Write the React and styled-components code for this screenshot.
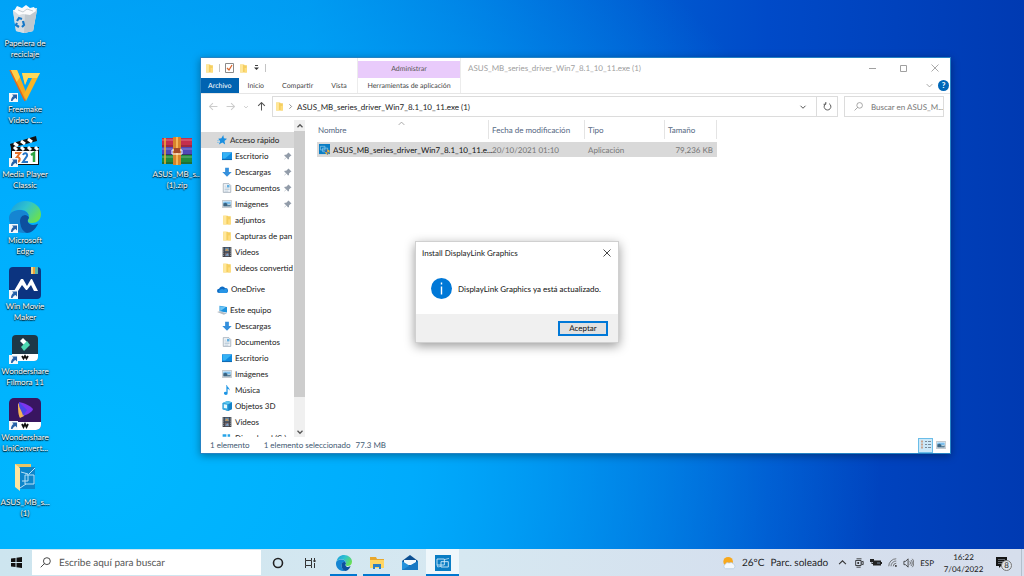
import React from 'react';
import styled, { createGlobalStyle, css } from 'styled-components';

const GlobalStyle = createGlobalStyle`
  * {
    box-sizing: border-box;
  }
  body {
    margin: 0;
    overflow: hidden;
    font-family: Lato, 'Open Sans', sans-serif;
    font-size: 8px;
    line-height: 12px;
    color: #222;
    text-rendering: geometricPrecision;
  }
  button, input {
    font: inherit;
    color: inherit;
    border: 0;
    padding: 0;
    margin: 0;
    background: none;
    text-rendering: inherit;
  }
  a {
    color: inherit;
    text-decoration: none;
  }
  ul {
    margin: 0;
    padding: 0;
    list-style: none;
  }
  svg {
    display: block;
    flex: none;
  }
`;

/* ---------- icons ---------- */

const FolderIcon = ({ size = 9 }) => (
  <svg width={size} height={size} viewBox="0 0 16 16">
    <path d="M2 1h7l1 1h4v13H2z" fill="#f5cf60" />
    <path d="M2 1h5v14H2z" fill="#ffe79b" />
    <path d="M10 7h4v8h-4z" fill="#ffdd7c" />
  </svg>
);

const StarIcon = () => (
  <svg width="10" height="10" viewBox="0 0 16 16">
    <path d="M10 0l1 5 5 1-4 3.500 1 5.500-4.500-3L3 15l2-5-3-4 5-1z" fill="#1b8fe0" />
    <path d="M0 9h4M0 12h3" stroke="#7cc0ee" strokeWidth="1.200" />
  </svg>
);

const DesktopIcon = () => (
  <svg width="10" height="10" viewBox="0 0 16 16">
    <path d="M0 2h16v12H0z" fill="#0f8be0" />
    <path d="M1 3h14L5 12H1z" fill="#35b2f5" />
    <path d="M0 13h16v1.500H0z" fill="#0a62ab" />
  </svg>
);

const DownloadIcon = () => (
  <svg width="10" height="10" viewBox="0 0 16 16">
    <path d="M5 1h6v7h4.500L8 15.500.5 8H5z" fill="#3590dc" />
  </svg>
);

const DocIcon = () => (
  <svg width="10" height="10" viewBox="0 0 16 16">
    <path d="M2 1h9l3 3v11H2z" fill="#f4f7fa" stroke="#8795a3" />
    <path d="M4 5h3M4 8h8M4 10.500h8M4 13h6" stroke="#9bb4c8" />
    <path d="M8 3h4v4H8z" fill="#61aee0" />
  </svg>
);

const PictureIcon = ({ width = 10 }) => (
  <svg width={width} height="10" viewBox="0 0 16 16">
    <path d="M.5 2.500h15v11H.5z" fill="#fff" stroke="#9aa5ae" />
    <path d="M2 4h12v4H2z" fill="#7dbfec" />
    <path d="M2 7l4-1 3 2h5v4H2z" fill="#3a6482" />
    <path d="M9 8h5v2H8z" fill="#b8cfdc" />
  </svg>
);

const VideoIcon = () => (
  <svg width="10" height="10" viewBox="0 0 16 16">
    <path d="M1 0h14v16H1z" fill="#3c4048" />
    <path d="M2.500 1v14M13.500 1v14" stroke="#d4d8dd" strokeDasharray="1.500 1.500" />
    <path d="M4.500 1h7v6h-7z" fill="#6087ab" />
    <path d="M4.500 9h7v6h-7z" fill="#7a6b70" />
    <path d="M5 5l3-3 3 4H5z" fill="#d79a4c" />
    <path d="M5 14l4-4 2 4z" fill="#7aa9d4" />
  </svg>
);

const CloudIcon = () => (
  <svg width="11" height="11" viewBox="0 0 16 16">
    <path d="M3 13a3 3 0 0 1 0-6 5 5 0 0 1 9-1 3.500 3.500 0 0 1 1 7z" fill="#0f6cc4" />
    <path d="M4 13a3 3 0 0 1 1-5 4 4 0 0 1 5 .5 3 3 0 0 1 5.500 2A2.500 2.500 0 0 1 13 13z" fill="#2795e6" />
  </svg>
);

const PcIcon = () => (
  <svg width="10" height="10" viewBox="0 0 16 16">
    <path d="M4 1l12 2v9L4 10z" fill="#1d93de" />
    <path d="M5 2l9 1.500L6 9H5z" fill="#6dc5f5" />
    <path d="M0 11l4-1 12 3-5 2.500z" fill="#b4bdc5" />
  </svg>
);

const MusicIcon = () => (
  <svg width="10" height="10" viewBox="0 0 16 16">
    <path d="M8 0c0 4 5 4 4 9-1-2-2-3-3-3v7a3 2.500 0 1 1-2-2V0z" fill="#1c94e4" />
  </svg>
);

const CubeIcon = () => (
  <svg width="10" height="10" viewBox="0 0 16 16">
    <path d="M9 0l7 2v11l-6 3-9-3V3z" fill="#1482c8" />
    <path d="M8 0l8 2-6 3-9-2z" fill="#5cc6ee" />
    <path d="M1 3l9 2v11l-9-3z" fill="#36a9e0" />
    <path d="M3 5l5 1v6l-5-1z" fill="#e7f8fc" />
  </svg>
);

const DiskIcon = () => (
  <svg width="10" height="10" viewBox="0 0 16 16">
    <path d="M1 2h6v4H1zM9 2h4v4H9z" fill="#27a4e8" />
    <path d="M0 9h16v4H0z" fill="#9aa3ab" />
  </svg>
);

const PinIcon = () => (
  <svg width="8" height="8" viewBox="0 0 16 16">
    <path d="M9 1l6 6-2 1-3 3v3l-2 1-3-4-4 4-.5-.5 4-4-4-3 1-2h3l3-3z" fill="#929ca9" />
  </svg>
);

const AppIcon = ({ size = 11 }) => (
  <svg width={size} height={size} viewBox="0 0 24 24">
    <path d="M0 0h24v24H0z" fill="#0a7dc4" />
    <path d="M3 6h11v9H3zM9 10h11v8H9z" fill="none" stroke="#d9effb" strokeWidth="1.300" />
    <path d="M14 7l7-2M3 15l1 3 5-1" fill="none" stroke="#d9effb" />
  </svg>
);

const AppShieldIcon = () => (
  <svg width="11" height="11" viewBox="0 0 24 24">
    <path d="M0 0h24v22H0z" fill="#0a7dc4" />
    <path d="M3 5h10v8H3zM8 9h11v8H8z" fill="none" stroke="#a8d8f2" strokeWidth="1.300" />
    <path d="M13 14l5-2 5 2v5l-5 5-5-5z" fill="#f0b732" />
    <path d="M13 14l5-2v6h-5zM18 18h5l-5 6z" fill="#2d68bd" />
  </svg>
);

const Chevron = ({ dir = 'down', size = 8, color = '#555', weight = 1.5 }) => {
  const paths = {
    down: 'M3 5.500l5 5 5-5',
    up: 'M3 10.500l5-5 5 5',
    right: 'M5.500 3l5 5-5 5'
  };
  return (
    <svg width={size} height={size} viewBox="0 0 16 16">
      <path d={paths[dir]} fill="none" stroke={color} strokeWidth={weight} />
    </svg>
  );
};

const Arrow = ({ dir = 'left', color = '#ccc' }) => {
  const paths = {
    left: 'M15 8H1M7 2L1 8l6 6',
    right: 'M1 8h14M9 2l6 6-6 6',
    up: 'M8 15V1M2 7l6-6 6 6'
  };
  return (
    <svg width="9" height="9" viewBox="0 0 16 16">
      <path d={paths[dir]} fill="none" stroke={color} strokeWidth="1.800" />
    </svg>
  );
};

const SearchIcon = ({ size = 9, color = '#8a8a8a' }) => (
  <svg width={size} height={size} viewBox="0 0 16 16">
    <circle cx="10" cy="6" r="5" fill="none" stroke={color} strokeWidth="1.300" />
    <path d="M6.500 9.500L1 15" stroke={color} strokeWidth="1.300" />
  </svg>
);

const CloseIcon = ({ color = '#a0a0a0' }) => (
  <svg width="8" height="8" viewBox="0 0 16 16">
    <path d="M1 1l14 14M15 1L1 15" stroke={color} strokeWidth="1.800" />
  </svg>
);

const EdgeIcon = ({ size = 32 }) => (
  <svg width={size} height={size} viewBox="0 0 32 32">
    <defs>
      <linearGradient id="edgeTop" x1="0" y1="0" x2="1" y2="0.600">
        <stop offset="0" stopColor="#1698df" />
        <stop offset="0.500" stopColor="#2fc3cf" />
        <stop offset="1" stopColor="#68df55" />
      </linearGradient>
    </defs>
    <path d="M1 14C2 5 9 0 16 0c9 0 16 6 16 13 0 6-4 9-9 9-4 0-5-2-4-3 2-3 1-9-6-10-5-1-10 1-12 5z" fill="url(#edgeTop)" />
    <path d="M0 17C0 11 6 9 11 9c4 0 8 2 9 6-4-3-9 0-9 6 0 5 3 9 7 11C7 33 0 26 0 17z" fill="#1585d2" />
    <path d="M11 20c0-3 2-6 5-6 2 0 4 1 4 3-3 3 0 7 4 7 3 0 5-2 5-1-3 6-7 9-11 9-4-1-7-6-7-12z" fill="#0d4f9e" />
  </svg>
);

const BinIcon = () => (
  <svg width="32" height="32" viewBox="0 0 32 32">
    <path d="M4 6l24-2-4 23-9 2-8-2z" fill="#e9edf0" />
    <path d="M4 7l12 3 12-4-4 21-9 2-8-2z" fill="#d5dce1" />
    <path d="M16 10l12-4-4 21-9 2z" fill="#bfc8cf" />
    <path d="M5 7l3-5 5 2 4-3 4 3 4-1 2 4-6 4-7-1-4 1z" fill="#fafbfc" />
    <path d="M9 6l5 2 4-3 6 2" fill="none" stroke="#c5cdd3" />
    <path d="M8 17l2-3 3 1M14 17l1 4-2 2M10 23l-3-2 1-2" fill="none" stroke="#1778c8" strokeWidth="2.200" />
  </svg>
);

const FreemakeIcon = () => (
  <svg width="32" height="32" viewBox="0 0 32 32">
    <path d="M1 0h7l9 22-1 9z" fill="#f7a91f" />
    <path d="M1 0h7l3 7-4 6z" fill="#ffd24a" />
    <path d="M13 3h18L17 31l-2-7 8-16h-4l-3 7z" fill="#f9b526" />
    <path d="M13 3h18l-3 5h-9l-3 7z" fill="#ffd95c" />
    <path d="M1 0l15 31" stroke="#e36a1c" strokeWidth="1.500" />
  </svg>
);

const ClapperIcon = () => (
  <svg width="32" height="32" viewBox="0 0 32 32">
    <path d="M1 9L27 1l1 5L2 13z" fill="#111" />
    <path d="M5 8l4 3M12 6l4 3M19 4l4 3" stroke="#fff" strokeWidth="3" />
    <path d="M2 12h28v18H2z" fill="#111" />
    <path d="M3 16h26v13H3z" fill="#fff" />
    <path d="M5 12l3 3M12 12l3 3M19 12l3 3M26 12l3 3" stroke="#fff" strokeWidth="3" />
    <path d="M6 18h5l-3 4c4 0 4 6-3 5" fill="none" stroke="#e4722a" strokeWidth="2" />
    <path d="M14 20c1-3 5-2 4 1l-4 6h5" fill="none" stroke="#2676c8" strokeWidth="2" />
    <path d="M22 20l3-2v9" fill="none" stroke="#2fa341" strokeWidth="2.500" />
  </svg>
);

const MovieMakerIcon = () => (
  <svg width="32" height="32" viewBox="0 0 32 32">
    <rect width="32" height="32" rx="4" fill="#0c3480" />
    <path d="M22 0h2v7h-2z" fill="#f2d98a" />
    <path d="M24 0h2v7h-2z" fill="#f0a038" />
    <path d="M26 0h3v7h-3z" fill="#59b5a8" />
    <path d="M5 24l7-12h2l4 7 4-7h1l6 12h-4l-3-6-4 5h-1l-4-5-4 6z" fill="#fff" />
  </svg>
);

const FilmoraIcon = () => (
  <svg width="32" height="32" viewBox="0 0 32 32">
    <rect x="3" y="3" width="26" height="26" rx="4" fill="#1d3847" />
    <path d="M3 22h26v3a4 4 0 0 1-4 4H3z" fill="#fff" />
    <path d="M11 9l3-3 4 4-3 3z" fill="#fff" />
    <path d="M12 15l6-6 3 4-6 6z" fill="#4ed8b2" />
    <path d="M13 24l1.500 2.500L16 24l1.500 2.500L19 24" fill="none" stroke="#111" strokeWidth="1.800" />
  </svg>
);

const UniConvertIcon = () => (
  <svg width="32" height="32" viewBox="0 0 32 32">
    <rect width="32" height="32" rx="5" fill="#381560" />
    <path d="M0 24h32v3a5 5 0 0 1-5 5H0z" fill="#fff" />
    <path d="M10 4c5 1 12 4 14 7 0 3-7 6-12 8z" fill="#7d35ee" />
    <path d="M9 5c3 3 6 7 6 13l-4 2c-2-3-2-10-2-15z" fill="#f5b455" />
    <path d="M10 4l8 8-4 6c-1-6-5-8-4-14z" fill="#4a46e8" />
    <path d="M13 26l1.500 3 1.500-3 1.500 3 1.500-3" fill="none" stroke="#111" strokeWidth="1.800" />
  </svg>
);

const DriverFolderIcon = () => (
  <svg width="32" height="32" viewBox="0 0 32 32">
    <path d="M6 1h16v5H6z" fill="#e9c566" />
    <path d="M10 4h16v22H10z" fill="#0d86cb" />
    <path d="M12 9l7 2v7h-6M16 12h9v9h-9zM11 25l6-4M26 5l-6 6" fill="none" stroke="#b9e2f7" />
    <path d="M6 1l5 4v23l-5-4z" fill="#ffe5a0" />
  </svg>
);

const ArchiveIcon = () => (
  <svg width="32" height="32" viewBox="0 0 32 32">
    <path d="M1 3h30v9H1z" fill="#c42f4d" />
    <path d="M1 12h30v8H1z" fill="#5148b5" />
    <path d="M1 20h30v9H1z" fill="#218a3c" />
    <path d="M1 5h30M1 14h30M1 22h30" stroke="#fff" strokeOpacity="0.350" />
    <path d="M1 11h30M1 19.500h30M1 28h30" stroke="#222" strokeOpacity="0.500" />
    <path d="M4 3v26" stroke="#edb737" strokeWidth="1.500" />
    <path d="M12 2h8v28h-8z" fill="#d8842b" />
    <path d="M15 2h2v28h-2z" fill="#f3b558" />
    <path d="M11 15h10v4H11z" fill="none" stroke="#fff" />
    <path d="M13 13h6v5h-6z" fill="#a64a28" />
  </svg>
);

const ExplorerIcon = () => (
  <svg width="16" height="16" viewBox="0 0 16 16">
    <path d="M1 2h6l1 2h7v9H1z" fill="#e8a82c" />
    <path d="M1 5h14v8H1z" fill="#ffd664" />
    <path d="M4 9h8v5h-2v-2H6v2H4z" fill="#2c7fc6" />
  </svg>
);

const MailIcon = () => (
  <svg width="18" height="18" viewBox="0 0 18 18">
    <path d="M1 7l8-6 8 6v9H1z" fill="#0b4f92" />
    <path d="M3 6h12v5H3z" fill="#f3f8fb" />
    <path d="M1 7l8 5 8-5v9H1z" fill="#2492dc" />
    <path d="M1 16l16-9v9z" fill="#1878c3" />
  </svg>
);

const WindowsIcon = () => (
  <svg width="11" height="11" viewBox="0 0 11 11">
    <path d="M0 1.500L4.500 1v4H0zM5.500.8L11 0v5H5.500zM0 6h4.500v4L0 9.500zM5.500 6H11v5l-5.500-.8z" fill="#111" />
  </svg>
);

const TaskViewIcon = () => (
  <svg width="12" height="12" viewBox="0 0 12 12">
    <path d="M.5 1v2.500h6V1M.5 11V8.500h6V11M.5 3.500v5M6.500 3.500v5M9.500 1v2M9.500 6v5" fill="none" stroke="#333" />
    <path d="M8.500 3h2v2h-2z" fill="#333" />
  </svg>
);

const WeatherIcon = () => (
  <svg width="14" height="14" viewBox="0 0 16 16">
    <circle cx="7" cy="6.500" r="5.500" fill="#f7a81d" />
    <path d="M4 14.500a3 3 0 0 1 0-5.500 3 3 0 0 1 4-1 4 4 0 0 1 5 1 3 3 0 0 1 0 5.500z" fill="#f4f8fc" stroke="#a9c3dd" strokeWidth="0.700" />
  </svg>
);

const MeetIcon = () => (
  <svg width="10" height="10" viewBox="0 0 12 12">
    <path d="M3 1h6M2 3h6.500v6H2zM8.500 5L11 4v4L8.500 7M3 11h5" fill="none" stroke="#222" />
    <circle cx="5" cy="6" r="1.200" fill="#222" />
  </svg>
);

const BatteryIcon = () => (
  <svg width="12" height="10" viewBox="0 0 12 10">
    <path d="M3 2.500h8v5H3z" fill="#222" />
    <path d="M11 4h1v2h-1zM0 1h4v3H0zM1.500 4v2H4" fill="#222" />
    <path d="M7 4h3v2H7z" fill="#4c5560" />
  </svg>
);

const WifiIcon = () => (
  <svg width="9" height="9" viewBox="0 0 12 12">
    <path d="M1 11A10 10 0 0 1 11 1M4 11a7 7 0 0 1 7-7M7 11a4 4 0 0 1 4-4" fill="none" stroke="#555" />
    <circle cx="10.500" cy="10.500" r="1.300" fill="#333" />
  </svg>
);

const SpeakerIcon = () => (
  <svg width="11" height="10" viewBox="0 0 13 12">
    <path d="M1 4h2l3-3v10L3 8H1z" fill="none" stroke="#333" />
    <path d="M8 4c1 1 1 3 0 4M9.500 2.500c2 2 2 5 0 7M11 1c2.500 3 2.500 7 0 10" fill="none" stroke="#555" />
  </svg>
);

const icons = {
  star: <StarIcon />,
  desktop: <DesktopIcon />,
  download: <DownloadIcon />,
  doc: <DocIcon />,
  picture: <PictureIcon />,
  folder: <FolderIcon size={10} />,
  video: <VideoIcon />,
  cloud: <CloudIcon />,
  pc: <PcIcon />,
  music: <MusicIcon />,
  cube: <CubeIcon />,
  disk: <DiskIcon />
};

/* ---------- data ---------- */

const shortcuts = [
  { lines: ['Papelera de', 'reciclaje'], icon: <BinIcon /> },
  { lines: ['Freemake', 'Video C...'], icon: <FreemakeIcon />, link: true },
  { lines: ['Media Player', 'Classic'], icon: <ClapperIcon />, link: true },
  { lines: ['Microsoft', 'Edge'], icon: <EdgeIcon />, link: true },
  { lines: ['Win Movie', 'Maker'], icon: <MovieMakerIcon />, link: true },
  { lines: ['Wondershare', 'Filmora 11'], icon: <FilmoraIcon />, link: true },
  { lines: ['Wondershare', 'UniConvert...'], icon: <UniConvertIcon />, link: true },
  { lines: ['ASUS_MB_s...', '(1)'], icon: <DriverFolderIcon /> },
  { lines: ['ASUS_MB_s...', '(1).zip'], icon: <ArchiveIcon />, column: 4, row: 3 }
];

const places = [
  { name: 'Acceso rápido', icon: 'star', root: true, selected: true },
  { name: 'Escritorio', icon: 'desktop', pinned: true },
  { name: 'Descargas', icon: 'download', pinned: true },
  { name: 'Documentos', icon: 'doc', pinned: true },
  { name: 'Imágenes', icon: 'picture', pinned: true },
  { name: 'adjuntos', icon: 'folder' },
  { name: 'Capturas de pan', icon: 'folder' },
  { name: 'Videos', icon: 'video' },
  { name: 'videos convertid', icon: 'folder' },
  { name: 'OneDrive', icon: 'cloud', root: true },
  { name: 'Este equipo', icon: 'pc', root: true },
  { name: 'Descargas', icon: 'download' },
  { name: 'Documentos', icon: 'doc' },
  { name: 'Escritorio', icon: 'desktop' },
  { name: 'Imágenes', icon: 'picture' },
  { name: 'Música', icon: 'music' },
  { name: 'Objetos 3D', icon: 'cube' },
  { name: 'Videos', icon: 'video' },
  { name: 'Disco local (C:)', icon: 'disk' }
];

/* ---------- desktop ---------- */

const Screen = styled.div`
  height: 100vh;
  display: flex;
  flex-direction: column;
  background:
    radial-gradient(ellipse 76% 120% at 10% 80%, rgba(0, 184, 255, 1) 0%, rgba(0, 176, 255, 0.9) 40%, rgba(0, 140, 240, 0) 100%),
    linear-gradient(90deg, #0096f0 0%, #008ce8 30%, #0068d8 53%, #004ac8 75%, #003ab2 100%);
`;

const Desktop = styled.main`
  position: relative;
  flex: 1;
  min-height: 0;
`;

const IconGrid = styled.div`
  height: 100%;
  padding: 4px 0 20px;
  display: grid;
  grid-template-columns: repeat(3, 50px) 54px;
  grid-template-rows: repeat(8, 1fr);
`;

const Shortcut = styled.button`
  grid-column: ${props => props.$column || 1};
  grid-row: ${props => props.$row || 'auto'};
  display: flex;
  flex-direction: column;
  align-items: center;
  justify-content: flex-start;
  gap: 2px;
  color: #fff;
  line-height: 11px;
  text-shadow: 0 1px 1px #000, 0 0 2px rgba(0, 0, 0, 0.8);
  white-space: nowrap;
`;

const ShortcutIcon = styled.span`
  position: relative;
`;

const LinkBadge = styled.span`
  position: absolute;
  left: 0;
  bottom: 0;
  background: #f4f8fb;
`;

const Line = styled.span`
  display: block;
`;

/* ---------- explorer window ---------- */

const Window = styled.section`
  position: absolute;
  top: 57px;
  right: 73px;
  bottom: 95px;
  left: 200px;
  display: flex;
  flex-direction: column;
  background: #fff;
  border: 1px solid #2583c4;
  box-shadow: 0 2px 8px rgba(0, 0, 0, 0.35);
`;

const TitleBar = styled.header`
  height: 36px;
  flex: none;
  display: flex;
  border-bottom: 1px solid #e6e6e6;
`;

const TitleLeft = styled.div`
  width: 156px;
  display: flex;
  flex-direction: column;
`;

const QuickTools = styled.div`
  height: 20px;
  padding-left: 4px;
  display: flex;
  align-items: center;
  gap: 5px;
`;

const Divider = styled.span`
  width: 1px;
  height: 8px;
  background: #c4c4c4;
`;

const Tabs = styled.div`
  flex: 1;
  display: flex;
`;

const Tab = styled.button`
  padding: 0 9px;
  color: #444;
  font-size: 7px;
  white-space: nowrap;
  ${props => props.$file && css`
    padding: 0 7px;
    background: #0063b1;
    color: #fff;
  `}
  ${props => props.$fill && css`
    flex: 1;
    padding: 0;
  `}
`;

const ToolTab = styled.div`
  width: 104px;
  display: flex;
  flex-direction: column;
  border: 1px solid #ececec;
  border-width: 0 1px;
`;

const ToolGroup = styled.span`
  height: 17px;
  margin-top: 3px;
  line-height: 17px;
  text-align: center;
  font-size: 7px;
  color: #555;
  background: #e9cbfb;
`;

const Title = styled.h1`
  flex: 1;
  margin: 0;
  padding: 4px 7px;
  font-size: 8px;
  font-weight: 400;
  color: #a0a0a0;
`;

const TitleRight = styled.div`
  display: flex;
  flex-direction: column;
  align-items: flex-end;
`;

const Controls = styled.div`
  display: flex;
`;

const ControlButton = styled.button`
  width: 31px;
  height: 20px;
  display: flex;
  align-items: center;
  justify-content: center;
`;

const HelpRow = styled.div`
  flex: 1;
  padding-right: 1px;
  display: flex;
  align-items: center;
  gap: 4px;
`;

const HelpButton = styled.button`
  width: 11px;
  height: 11px;
  border-radius: 50%;
  background: #0067b8;
  color: #fff;
  line-height: 11px;
  font-weight: 700;
`;

const AddressRow = styled.div`
  flex: none;
  padding: 2px 6px 3px 4px;
  display: flex;
  gap: 6px;
`;

const History = styled.div`
  width: 61px;
  padding: 0 0 0 4px;
  display: flex;
  align-items: center;
  justify-content: space-between;

  button {
    display: flex;
  }
`;

const AddressBox = styled.div`
  flex: 1;
  height: 21px;
  padding-left: 2px;
  display: flex;
  align-items: center;
  gap: 3px;
  border: 1px solid #dcdcdc;
`;

const Path = styled.a`
  flex: 1;
  color: #222;
`;

const BoxButton = styled.button`
  width: 21px;
  height: 19px;
  display: flex;
  align-items: center;
  justify-content: center;
  border-left: ${props => props.$line ? '1px solid #dcdcdc' : '0'};
`;

const SearchBox = styled.label`
  width: 100px;
  height: 21px;
  padding: 0 0 0 9px;
  display: flex;
  align-items: center;
  gap: 8px;
  border: 1px solid #dcdcdc;

  input {
    flex: 1;
    min-width: 0;
    outline: none;
  }
  input::placeholder {
    color: #767676;
    opacity: 1;
  }
`;

const Body = styled.div`
  flex: 1;
  min-height: 0;
  display: flex;
`;

const NavPane = styled.nav`
  width: 93px;
  flex: none;
  padding-top: 12px;
  overflow: hidden;
`;

const Place = styled.li`
  height: 16px;
  margin-top: ${props => props.$gap ? '5px' : '0'};
  background: ${props => props.$selected ? '#d9d9d9' : 'transparent'};

  a {
    height: 100%;
    padding: 0 2px 0 ${props => props.$root ? '16px' : '21px'};
    display: flex;
    align-items: center;
    gap: 3px;
    white-space: nowrap;
  }
  span {
    flex: 1;
  }
`;

const ScrollBar = styled.div`
  width: 11px;
  flex: none;
  display: flex;
  flex-direction: column;
  align-items: center;
  background: #f0f0f0;

  button {
    height: 11px;
  }
`;

const Thumb = styled.div`
  width: 100%;
  height: 84%;
  margin-bottom: auto;
  background: #cdcdcd;
`;

const FilePane = styled.div`
  flex: 1;
  position: relative;
  padding-left: 12px;
`;

const SortMark = styled.span`
  position: absolute;
  top: -1px;
  left: 92px;
`;

const Files = styled.table`
  width: 400px;
  table-layout: fixed;
  border-collapse: separate;
  border-spacing: 0;

  th {
    height: 19px;
    padding: 0 3px;
    text-align: left;
    font-weight: 400;
    color: #54677f;
    border-right: 1px solid #e4e4e4;
  }
  th:first-child {
    padding-left: 1px;
  }
  tbody::before {
    content: '';
    display: block;
    height: 3px;
  }
  td {
    height: 15px;
    padding: 0 4px 0 3px;
    color: #777;
    background: #d9d9d9;
    white-space: nowrap;
  }
  td:first-child {
    padding: 0 0 0 2px;
  }
`;

const FileName = styled.span`
  display: flex;
  align-items: center;
  gap: 3px;
  color: #111;
`;

const StatusBar = styled.footer`
  height: 16px;
  flex: none;
  padding: 0 2px 0 9px;
  display: flex;
  align-items: center;
  color: #3f5a73;
`;

const StatusText = styled.span`
  margin-right: ${props => props.$wide ? '14px' : '5px'};
`;

const ViewButton = styled.button`
  width: 15px;
  height: 15px;
  display: flex;
  align-items: center;
  justify-content: center;
  border: 1px solid ${props => props.$active ? '#6bbde8' : 'transparent'};
  background: ${props => props.$active ? '#cce8f8' : 'none'};
  margin-left: ${props => props.$active ? 'auto' : '0'};
`;

/* ---------- dialog ---------- */

const Dialog = styled.section`
  position: absolute;
  top: 241px;
  left: 415px;
  width: 204px;
  background: #fff;
  border: 1px solid #d0d0d0;
  box-shadow: 0 3px 10px rgba(0, 0, 0, 0.4);
`;

const DialogTitle = styled.header`
  height: 21px;
  padding: 0 7px 0 6px;
  display: flex;
  align-items: center;
  justify-content: space-between;
`;

const DialogBody = styled.div`
  height: 51px;
  padding-left: 15px;
  display: flex;
  align-items: center;
  gap: 6px;
  color: #111;
`;

const DialogFooter = styled.footer`
  height: 28px;
  padding-right: 10px;
  display: flex;
  align-items: center;
  justify-content: flex-end;
  background: #f0f0f0;
`;

const OkButton = styled.button`
  width: 50px;
  height: 15px;
  line-height: 11px;
  color: #111;
  background: #e1e1e1;
  border: 2px solid #0078d7;
`;

/* ---------- taskbar ---------- */

const Taskbar = styled.footer`
  height: 27px;
  flex: none;
  display: flex;
  background: linear-gradient(90deg, #cde5ef 0%, #d6e8f1 45%, #d5dfee 75%, #d6deec 100%);
`;

const TaskSearch = styled.label`
  width: 229px;
  margin: 1px 0;
  padding: 0 8px;
  display: flex;
  align-items: center;
  gap: 8px;
  background: #fff;
  font-size: 10px;

  input {
    flex: 1;
    min-width: 0;
    outline: none;
  }
  input::placeholder {
    color: #555;
    opacity: 1;
  }
`;

const TaskButton = styled.button`
  width: ${props => props.$start ? '32px' : '33px'};
  display: flex;
  align-items: center;
  justify-content: center;
  background: ${props => props.$active ? '#eff7fb' : 'none'};
  border: 3px solid transparent;
  border-width: 2px ${props => props.$active ? '0' : '3px'};
  border-image: ${props => props.$open ? 'linear-gradient(0deg, #0078d0 2px, transparent 2px) 2 0' : 'none'};
`;

const Tray = styled.div`
  margin-left: auto;
  display: flex;
  align-items: center;
`;

const Weather = styled.button`
  margin-right: 9px;
  display: flex;
  align-items: center;
  gap: 6px;
  font-size: 10px;
`;

const TrayIcons = styled.div`
  display: flex;
  align-items: center;
  gap: 6px;
`;

const Clock = styled.time`
  width: 59px;
  line-height: 12px;
  text-align: center;
`;

const Notifications = styled.button`
  position: relative;
  width: 12px;
  height: 15px;
  margin: 0 13px 0 3px;
`;

const Badge = styled.span`
  position: absolute;
  left: 5px;
  top: 5px;
  width: 11px;
  height: 11px;
  border-radius: 50%;
  border: 1px solid #777;
  background: #dde2ea;
  font-size: 8px;
  line-height: 9px;
`;

const ShowDesktop = styled.button`
  width: 3px;
  height: 100%;
  border-left: 1px solid #b4bfcc;
`;

function Shortcuts() {
  return (
    <IconGrid>
      {shortcuts.map((item, i) => (
        <Shortcut key={i} $column={item.column} $row={item.row || i + 1}>
          <ShortcutIcon>
            {item.icon}
            {item.link && (
              <LinkBadge>
                <svg width="9" height="9" viewBox="0 0 9 9">
                  <path d="M3 1.500h5v5L6.500 5C5 5.500 4 6.500 3.500 8H2C2 5.500 3 4 4.500 3z" fill="#2661a8" />
                </svg>
              </LinkBadge>
            )}
          </ShortcutIcon>
          <span>
            {item.lines.map(line => <Line key={line}>{line}</Line>)}
          </span>
        </Shortcut>
      ))}
    </IconGrid>
  );
}

function Explorer() {
  return (
    <Window>
      <TitleBar>
        <TitleLeft>
          <QuickTools>
            <FolderIcon size={9} />
            <Divider />
            <svg width="9" height="10" viewBox="0 0 9 10">
              <path d="M.5.5h8v9h-8z" fill="#fff" stroke="#8a8a8a" />
              <path d="M2 5l2 2 3-5" fill="none" stroke="#d9642b" strokeWidth="1.200" />
            </svg>
            <FolderIcon size={9} />
            <svg width="7" height="6" viewBox="0 0 7 6">
              <path d="M2 .5h3" stroke="#444" />
              <path d="M1 2.500h5L3.500 5z" fill="#333" />
            </svg>
            <Divider />
          </QuickTools>
          <Tabs>
            <Tab $file>Archivo</Tab>
            <Tab>Inicio</Tab>
            <Tab>Compartir</Tab>
            <Tab>Vista</Tab>
          </Tabs>
        </TitleLeft>
        <ToolTab>
          <ToolGroup>Administrar</ToolGroup>
          <Tab $fill>Herramientas de aplicación</Tab>
        </ToolTab>
        <Title>ASUS_MB_series_driver_Win7_8.1_10_11.exe (1)</Title>
        <TitleRight>
          <Controls>
            <ControlButton aria-label="Minimizar">
              <svg width="7" height="7" viewBox="0 0 7 7"><path d="M0 3.500h7" stroke="#a0a0a0" /></svg>
            </ControlButton>
            <ControlButton aria-label="Maximizar">
              <svg width="7" height="7" viewBox="0 0 7 7"><path d="M.5.5h6v6h-6z" fill="none" stroke="#a0a0a0" /></svg>
            </ControlButton>
            <ControlButton aria-label="Cerrar"><CloseIcon /></ControlButton>
          </Controls>
          <HelpRow>
            <Chevron color="#999" size={9} />
            <HelpButton>?</HelpButton>
          </HelpRow>
        </TitleRight>
      </TitleBar>

      <AddressRow>
        <History>
          <button aria-label="Atrás"><Arrow dir="left" /></button>
          <button aria-label="Adelante"><Arrow dir="right" /></button>
          <button aria-label="Recientes"><Chevron size={6} color="#aaa" /></button>
          <button aria-label="Subir"><Arrow dir="up" color="#555" /></button>
        </History>
        <AddressBox>
          <FolderIcon size={9} />
          <Chevron dir="right" size={7} />
          <Path href="#">ASUS_MB_series_driver_Win7_8.1_10_11.exe (1)</Path>
          <BoxButton aria-label="Ubicaciones anteriores"><Chevron weight={2} /></BoxButton>
          <BoxButton $line aria-label="Actualizar">
            <svg width="9" height="9" viewBox="0 0 16 16">
              <path d="M11 3a6 6 0 1 1-6 0M5 0v4H1" fill="none" stroke="#555" strokeWidth="1.700" />
            </svg>
          </BoxButton>
        </AddressBox>
        <SearchBox>
          <SearchIcon />
          <input aria-label="Buscar" placeholder="Buscar en ASUS_M..." />
        </SearchBox>
      </AddressRow>

      <Body>
        <NavPane>
          <ul>
            {places.map((place, i) => (
              <Place
                key={i}
                $root={place.root}
                $selected={place.selected}
                $gap={place.root && !place.selected}
              >
                <a href="#">
                  {icons[place.icon]}
                  <span>{place.name}</span>
                  {place.pinned && <PinIcon />}
                </a>
              </Place>
            ))}
          </ul>
        </NavPane>
        <ScrollBar>
          <button aria-label="Arriba"><Chevron dir="up" weight={2.5} /></button>
          <Thumb />
          <button aria-label="Abajo"><Chevron weight={2.5} /></button>
        </ScrollBar>
        <FilePane>
          <SortMark><Chevron dir="up" size={9} color="#999" /></SortMark>
          <Files>
            <colgroup>
              <col style={{ width: 172 }} />
              <col style={{ width: 96 }} />
              <col style={{ width: 80 }} />
              <col />
            </colgroup>
            <thead>
              <tr>
                <th>Nombre</th>
                <th>Fecha de modificación</th>
                <th>Tipo</th>
                <th>Tamaño</th>
              </tr>
            </thead>
            <tbody>
              <tr>
                <td>
                  <FileName>
                    <AppShieldIcon />
                    ASUS_MB_series_driver_Win7_8.1_10_11.e...
                  </FileName>
                </td>
                <td>20/10/2021 01:10</td>
                <td>Aplicación</td>
                <td align="right">79,236 KB</td>
              </tr>
            </tbody>
          </Files>
        </FilePane>
      </Body>

      <StatusBar>
        <StatusText $wide>1 elemento</StatusText>
        <StatusText>1 elemento seleccionado</StatusText>
        <StatusText>77.3 MB</StatusText>
        <ViewButton $active aria-label="Detalles">
          <svg width="11" height="10" viewBox="0 0 11 10">
            <path d="M1 1.500h2M1 4.500h2M1 7.500h2" stroke="#c9a48e" strokeWidth="2" />
            <path d="M5 1.500h2M8 1.500h3M5 4.500h2M8 4.500h3M5 7.500h2M8 7.500h3" stroke="#7a8b99" />
          </svg>
        </ViewButton>
        <ViewButton aria-label="Iconos grandes"><PictureIcon /></ViewButton>
      </StatusBar>
    </Window>
  );
}

function InstallDialog() {
  return (
    <Dialog role="dialog" aria-label="Install DisplayLink Graphics">
      <DialogTitle>
        <span>Install DisplayLink Graphics</span>
        <button aria-label="Cerrar"><CloseIcon color="#333" /></button>
      </DialogTitle>
      <DialogBody>
        <svg width="21" height="21" viewBox="0 0 21 21">
          <circle cx="10.500" cy="10.500" r="10.500" fill="#0078d7" />
          <path d="M10.500 8.500v8M10.500 4.500v2" stroke="#fff" strokeWidth="1.400" />
        </svg>
        <span>DisplayLink Graphics ya está actualizado.</span>
      </DialogBody>
      <DialogFooter>
        <OkButton>Aceptar</OkButton>
      </DialogFooter>
    </Dialog>
  );
}

export default function App() {
  return (
    <Screen>
      <GlobalStyle />
      <Desktop>
        <Shortcuts />
        <Explorer />
        <InstallDialog />
      </Desktop>
      <Taskbar>
        <TaskButton $start aria-label="Inicio"><WindowsIcon /></TaskButton>
        <TaskSearch>
          <SearchIcon size={11} color="#333" />
          <input aria-label="Buscar" placeholder="Escribe aquí para buscar" />
        </TaskSearch>
        <TaskButton aria-label="Cortana">
          <svg width="12" height="12" viewBox="0 0 12 12">
            <circle cx="6" cy="6" r="4.500" fill="none" stroke="#222" strokeWidth="1.600" />
          </svg>
        </TaskButton>
        <TaskButton aria-label="Vista de tareas"><TaskViewIcon /></TaskButton>
        <TaskButton $open aria-label="Edge"><EdgeIcon size={16} /></TaskButton>
        <TaskButton $open aria-label="Explorador"><ExplorerIcon /></TaskButton>
        <TaskButton aria-label="Correo"><MailIcon /></TaskButton>
        <TaskButton $open $active aria-label="DisplayLink"><AppIcon size={16} /></TaskButton>
        <Tray>
          <Weather>
            <WeatherIcon />
            <span>26°C</span>
            <span>Parc. soleado</span>
          </Weather>
          <TrayIcons>
            <Chevron dir="up" size={11} color="#333" />
            <MeetIcon />
            <BatteryIcon />
            <WifiIcon />
            <SpeakerIcon />
            <span>ESP</span>
          </TrayIcons>
          <Clock>
            <Line>16:22</Line>
            <Line>7/04/2022</Line>
          </Clock>
          <Notifications aria-label="Notificaciones">
            <svg width="11" height="11" viewBox="0 0 11 11">
              <path d="M0 0h11v9H5l-2 2V9H0z" fill="#151515" />
              <path d="M2 2.500h7M2 4.500h7M2 6.500h5" stroke="#8a8f98" strokeWidth="0.700" />
            </svg>
            <Badge>8</Badge>
          </Notifications>
          <ShowDesktop aria-label="Mostrar escritorio" />
        </Tray>
      </Taskbar>
    </Screen>
  );
}
